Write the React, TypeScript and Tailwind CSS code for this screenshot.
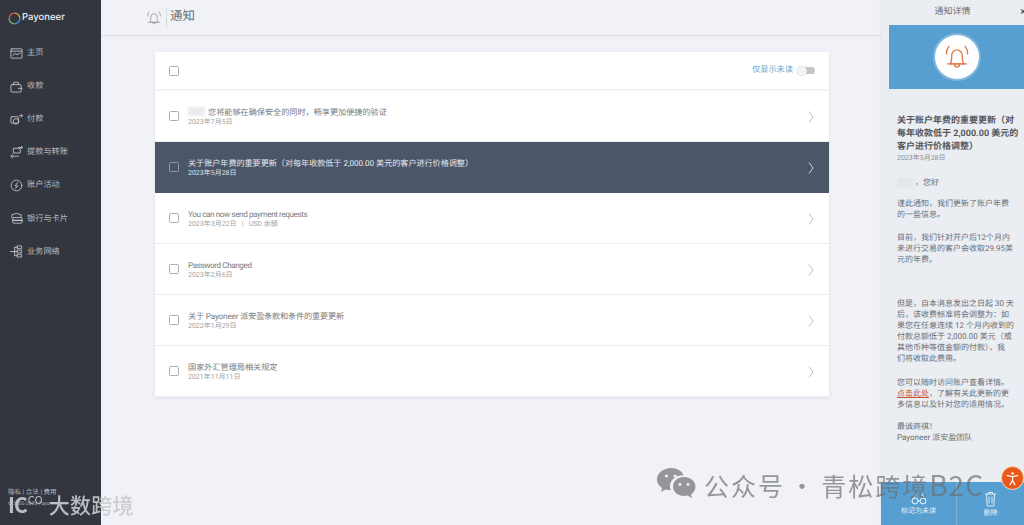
import React from 'react';

const cjk = "font-['Roboto','Noto_Sans_CJK_SC',sans-serif] [text-rendering:geometricPrecision]";

const navItems = [
  { label: '主页', icon: 'home' },
  { label: '收款', icon: 'receive' },
  { label: '付款', icon: 'pay' },
  { label: '提款与转账', icon: 'transfer' },
  { label: '账户活动', icon: 'activity' },
  { label: '银行与卡片', icon: 'bank' },
  { label: '业务网络', icon: 'network' },
];

const rows = [
  { title: '您将能够在确保安全的同时，畅享更加便捷的验证', date: '2023年7月5日', blur: true, track: '' },
  { title: '关于账户年费的重要更新（对每年收款低于 2,000.00 美元的客户进行价格调整）', date: '2023年5月28日', active: true, track: 'tracking-[-0.05px]' },
  { title: 'You can now send payment requests', date: '2023年3月22日   |   USD 余额', track: 'tracking-[-0.4px]' },
  { title: 'Password Changed', date: '2023年2月6日', track: 'tracking-[-0.4px]' },
  { title: '关于 Payoneer 派安盈条款和条件的重要更新', date: '2022年1月29日', track: 'tracking-[-0.15px]' },
  { title: '国家外汇管理局相关规定', date: '2021年11月11日', track: '' },
];

function NavIcon({ name }: { name: string }) {
  const p = { fill: 'none', stroke: '#c9cbd0', strokeWidth: 0.9, strokeLinecap: 'round' as const, strokeLinejoin: 'round' as const };
  return (
    <svg width="13" height="13" viewBox="0 0 14 14" className="shrink-0" {...p}>
      {name === 'home' && (
        <>
          <rect x="1" y="2" width="12" height="10" rx="1" />
          <path d="M1 4.500h12M3 9l2.500-2 2 1.200L11 6.500" />
        </>
      )}
      {name === 'receive' && (
        <>
          <rect x="1" y="5" width="11" height="8" rx="1" />
          <path d="M4 5V2.500h5V5M9 9h4" />
        </>
      )}
      {name === 'pay' && (
        <>
          <rect x="1" y="4" width="8" height="7" rx="1" />
          <circle cx="6.500" cy="9" r="3" />
          <path d="M10 3h3.500M12 1.500l1.500 1.500-1.500 1.500" />
        </>
      )}
      {name === 'transfer' && (
        <>
          <rect x="4" y="2.500" width="7" height="5" />
          <path d="M1 11h8M3 9l-2 2 2 2M9 1.500h4.500M12 0l1.500 1.500L12 3" />
        </>
      )}
      {name === 'activity' && (
        <>
          <circle cx="7" cy="7" r="5.800" />
          <path d="M8.500 3.500 5.500 7.500h3l-3 3" />
        </>
      )}
      {name === 'bank' && (
        <>
          <path d="M2 6V3l5-1.500L12 3v3" />
          <rect x="3" y="6" width="10" height="6" rx="1" />
          <path d="M3 9h10" strokeWidth="1.500" />
        </>
      )}
      {name === 'network' && (
        <>
          <path d="M0.500 7H5M5 2.500V11.500M5 2.500h3M5 7h3M5 11.500h3" />
          <rect x="8" y="1" width="4.500" height="3" />
          <rect x="8" y="5.500" width="4.500" height="3" />
          <rect x="8" y="10" width="4.500" height="3" />
        </>
      )}
    </svg>
  );
}

function Bell({ size, color }: { size: number; color: string }) {
  return (
    <svg width={size} height={size} viewBox="0 0 24 24" fill="none" stroke={color} strokeWidth="1.100" strokeLinecap="round" strokeLinejoin="round">
      <path d="M6.500 17.500c1-1.500 1.300-3 1.300-7a4.200 4.200 0 0 1 8.400 0c0 4 .3 5.500 1.300 7z" />
      <path d="M4.500 17.500h15M10 17.700a2 2.200 0 0 0 4 0" />
      <path d="M5.500 3.500c-1.300 1.500-2 3.500-2 6M18.500 3.500c1.300 1.500 2 3.500 2 6" />
    </svg>
  );
}

function Checkbox({ dark }: { dark?: boolean }) {
  return <span className={`block w-[10px] h-[10px] rounded-[1.500px] border ${dark ? 'border-[#8f99a6]' : 'border-[#adadad]'} bg-transparent shrink-0`} />;
}

function Chevron({ dark }: { dark?: boolean }) {
  return (
    <svg width="6" height="12" viewBox="0 0 6 12" fill="none" stroke={dark ? '#dfe3e8' : '#b5b8bd'} strokeWidth="0.900" className="mt-[1px]">
      <path d="M1 0.500c1.500 2 3 4 4 5.500-1 1.500-2.500 3.500-4 5.500" />
    </svg>
  );
}

function Sidebar() {
  return (
    <aside className={`w-[101px] h-full shrink-0 bg-[#33363f] flex flex-col ${cjk}`}>
      <div className="flex items-center h-[36px] pl-[8px] gap-[1px]">
        <svg width="13" height="13" viewBox="0 0 12 12" fill="none" strokeWidth="1.200">
          <path d="M6 1a5 5 0 0 1 5 5" stroke="#e8a33c" />
          <path d="M11 6a5 5 0 0 1-5 5" stroke="#4a90d9" />
          <path d="M6 11a5 5 0 0 1-5-5" stroke="#6bb86a" />
          <path d="M1 6a5 5 0 0 1 5-5" stroke="#e2574c" />
        </svg>
        <span className="text-[9.500px] leading-none font-medium text-[#eceef0] font-['Inter',sans-serif]">Payoneer</span>
      </div>
      <nav className="flex flex-col pt-[7px] pl-[10px] gap-[13.150px]">
        {navItems.map((it) => (
          <div key={it.label} className="flex items-center gap-[4px] h-[20px]">
            <NavIcon name={it.icon} />
            <span className="text-[8.200px] leading-none text-[#b9bbc0]">{it.label}</span>
          </div>
        ))}
      </nav>
      <div className="mt-auto pl-[8px] pb-[18px] flex flex-col gap-[7px] leading-none text-[#b5b7bc]">
        <span className="text-[6.500px]">隐私 | 合法 | 费用</span>
        <span className="text-[5px]">© 2005-2023 Payoneer Inc.</span>
      </div>
    </aside>
  );
}

function NotificationRow({ row }: { row: (typeof rows)[number] }) {
  return (
    <div className={`flex items-center h-[51px] pl-[14px] pr-[15px] border-b ${row.active ? 'bg-[#4b5769] border-[#4b5769]' : 'bg-white border-[#eceef2]'}`}>
      <Checkbox dark={row.active} />
      <div className="ml-[9px] flex-1 flex flex-col gap-[1px]">
        <div className={`text-[8.150px] leading-[10px] whitespace-pre flex ${row.track} ${row.active ? 'text-[#e6e9ee]' : 'text-[#77797d]'}`}>
          {row.blur && <span className="w-[17px] h-[9px] mr-[3px] bg-[#e9ebee] blur-[1px]" />}
          {row.title}
        </div>
        <div className={`text-[7px] leading-[8px] whitespace-pre ${row.active ? 'text-[#dde1e6]' : 'text-[#a0a2a6]'}`}>{row.date}</div>
      </div>
      <Chevron dark={row.active} />
    </div>
  );
}

function MainPanel() {
  return (
    <main className={`flex-1 h-full min-w-0 flex flex-col bg-[#f0f2f7] ${cjk}`}>
      <header className="h-[36px] shrink-0 flex items-center pl-[44px] border-b border-[#dcdee3]">
        <Bell size={18} color="#9b9da1" />
        <span className="ml-[3px] h-[20px] w-px bg-[#d9dbe0]" />
        <span className="ml-[3px] text-[12.500px] leading-none text-[#6d6f74]">通知</span>
      </header>
      <section className="mt-[16px] ml-[54px] w-[674px] flex flex-col gap-[2px] shadow-[0_1px_3px_rgba(0,0,0,0.08)]">
        <div className="h-[37px] bg-white flex items-center pl-[14px] pr-[14px]">
          <Checkbox />
          <span className="ml-auto text-[8.200px] leading-none text-[#5f9fc9]">仅显示未读</span>
          <span className="ml-[6px] relative w-[16px] h-[7px] rounded-full bg-[#c4c5c8] flex items-center">
            <span className="absolute left-[-2px] w-[10px] h-[10px] rounded-full bg-[#f4f4f5] shadow-[0_0_1px_rgba(0,0,0,0.3)]" />
          </span>
        </div>
        <div className="flex flex-col">
          {rows.map((r) => (
            <NotificationRow key={r.date} row={r} />
          ))}
        </div>
      </section>
    </main>
  );
}

function DetailPanel() {
  return (
    <aside className={`relative w-[143px] h-full shrink-0 flex flex-col bg-[#eaedf2] ${cjk} shadow-[-1px_0_2px_rgba(0,0,0,0.05)]`}>
      <div className="h-[25px] shrink-0 flex items-center justify-center text-[9px] leading-none text-[#6f7175]">
        通知详情
        <span className="absolute right-[-2px] top-[6px] text-[11px] leading-none text-[#444]">×</span>
      </div>
      <div className="ml-[8px] h-[64px] w-[135px] shrink-0 bg-[#569fd0] flex items-center justify-center">
        <div className="w-[44px] h-[44px] rounded-full bg-white flex items-center justify-center shadow-[0_0_0_2px_rgba(255,255,255,0.25)]">
          <Bell size={30} color="#dc7a4c" />
        </div>
      </div>
      <div className="pl-[16px] flex-1 min-h-0 text-[8px] leading-[11px] whitespace-nowrap text-[#6c6e72]">
        <h2 className="mt-[26px] text-[9px] leading-[13px] font-bold text-[#55575b]">
          关于账户年费的重要更新（对<br />每年收款低于 2,000.00 美元的<br />客户进行价格调整）
        </h2>
        <p className="text-[7px] leading-[10px] -mt-[1px] text-[#8d8f93]">2023年5月28日</p>
        <p className="mt-[13.500px] flex items-center">
          <span className="w-[16px] h-[9px] mr-[2px] bg-[#e3e5ea] blur-[1px]" />，您好
        </p>
        <p className="mt-[10px]">谨此通知，我们更新了账户年费<br />的一些信息。</p>
        <p className="mt-[12px]">目前，我们针对开户后12个月内<br />未进行交易的客户会收取29.95美<br />元的年费。</p>
        <p className="mt-[33px]">
          但是，自本消息发出之日起 30 天<br />后，该收费标准将会调整为：如<br />果您在任意连续 12 个月内收到的<br />付款总额低于 2,000.00 美元（或<br />其他币种等值金额的付款），我<br />们将收取此费用。
        </p>
        <p className="mt-[13px]">
          您可以随时访问账户查看详情。<br /><span className="text-[#c8562c] underline">点击此处</span>，了解有关此更新的更<br />多信息以及针对您的适用情况。
        </p>
        <p className="mt-[11px]">最诚商祺！<br />Payoneer 派安盈团队</p>
      </div>
      <div className="h-[43px] shrink-0 bg-[#569fd0] flex text-[7px] text-[#e8f1f7]">
        <div className="w-[76px] flex flex-col items-center justify-center gap-[3px] border-r border-[#7ab3da]">
          <svg width="16" height="12" viewBox="0 0 16 12" fill="none" stroke="#eef5fa" strokeWidth="1">
            <circle cx="4" cy="8" r="3" />
            <circle cx="12" cy="8" r="3" />
            <path d="M7 8h2M2 6l3-5M14 6l-3-5" />
          </svg>
          <span className="leading-none">标记为未读</span>
        </div>
        <div className="flex-1 flex flex-col items-center justify-center gap-[3px]">
          <svg width="13" height="16" viewBox="0 0 13 16" fill="none" stroke="#eef5fa" strokeWidth="0.900">
            <path d="M1 3h11M4.500 3V1.500h4V3M2.500 3l.7 12h6.600l.7-12M5 5.500v7M8 5.500v7" />
          </svg>
          <span className="leading-none">删除</span>
        </div>
      </div>
    </aside>
  );
}

export default function App() {
  return (
    <div className="relative flex w-[1024px] h-[525px] overflow-hidden">
      <Sidebar />
      <MainPanel />
      <DetailPanel />

      {/* watermarks laid over the page */}
      <div className="absolute left-[656px] top-[467px] flex items-center gap-[8px] text-[25px] leading-none tracking-[2px] [word-spacing:-3px] text-[#6e7074] opacity-70 font-['Noto_Sans_CJK_SC',sans-serif]">
        <svg width="40" height="34" viewBox="0 0 40 34" fill="#6e7074">
          <path d="M15 1C7.500 1 1 6 1 12.500c0 3.500 2 6.500 5 8.500l-1 4 4.500-2.500c1.500.4 3 .6 4.500.6h.8c-.5-1.300-.8-2.500-.8-3.800 0-6.300 5.800-11 12.500-11h1C26.500 4.500 21 1 15 1z" />
          <path d="M28 10c-6 0-11 4-11 9.500S22 29 28 29c1.200 0 2.400-.2 3.500-.5L36 31l-1-3.500c2.700-1.800 4.500-4.700 4.500-8C39.500 14 34 10 28 10z" />
          <circle cx="10.500" cy="9" r="1.600" fill="#f0f2f7" />
          <circle cx="19" cy="9" r="1.600" fill="#f0f2f7" />
          <circle cx="24" cy="17.500" r="1.400" fill="#f0f2f7" />
          <circle cx="32" cy="17.500" r="1.400" fill="#f0f2f7" />
        </svg>
        <span className="whitespace-pre">公众号 · 青松跨境<span className="text-[28px] tracking-[1px]">B2C</span></span>
      </div>
      <div className="absolute left-[8px] top-[494px] flex items-center text-[#c9cbcf] opacity-90 font-['Noto_Sans_CJK_SC',sans-serif]">
        <span className="text-[21px] leading-none font-bold tracking-[-1px]">IC</span>
        <span className="text-[11px] leading-none -mt-[11px] ml-[1px] w-[21px]">CO</span>
        <span className="text-[21px] leading-none tracking-[0.300px] font-medium">大数跨境</span>
      </div>
      <div className="absolute left-[1001px] top-[466px] w-[23px] h-[24px] rounded-full bg-[#e8591a] border border-[#f5d9c8] flex items-center justify-center">
        <svg width="15" height="15" viewBox="0 0 16 16" fill="none" stroke="#fff" strokeWidth="1.300" strokeLinecap="round">
          <circle cx="8" cy="2.500" r="1.300" fill="#fff" stroke="none" />
          <path d="M2.500 5l5.500 1 5.500-1M8 6v4M8 10l-2.500 4.500M8 10l2.500 4.500" />
        </svg>
      </div>
    </div>
  );
}
